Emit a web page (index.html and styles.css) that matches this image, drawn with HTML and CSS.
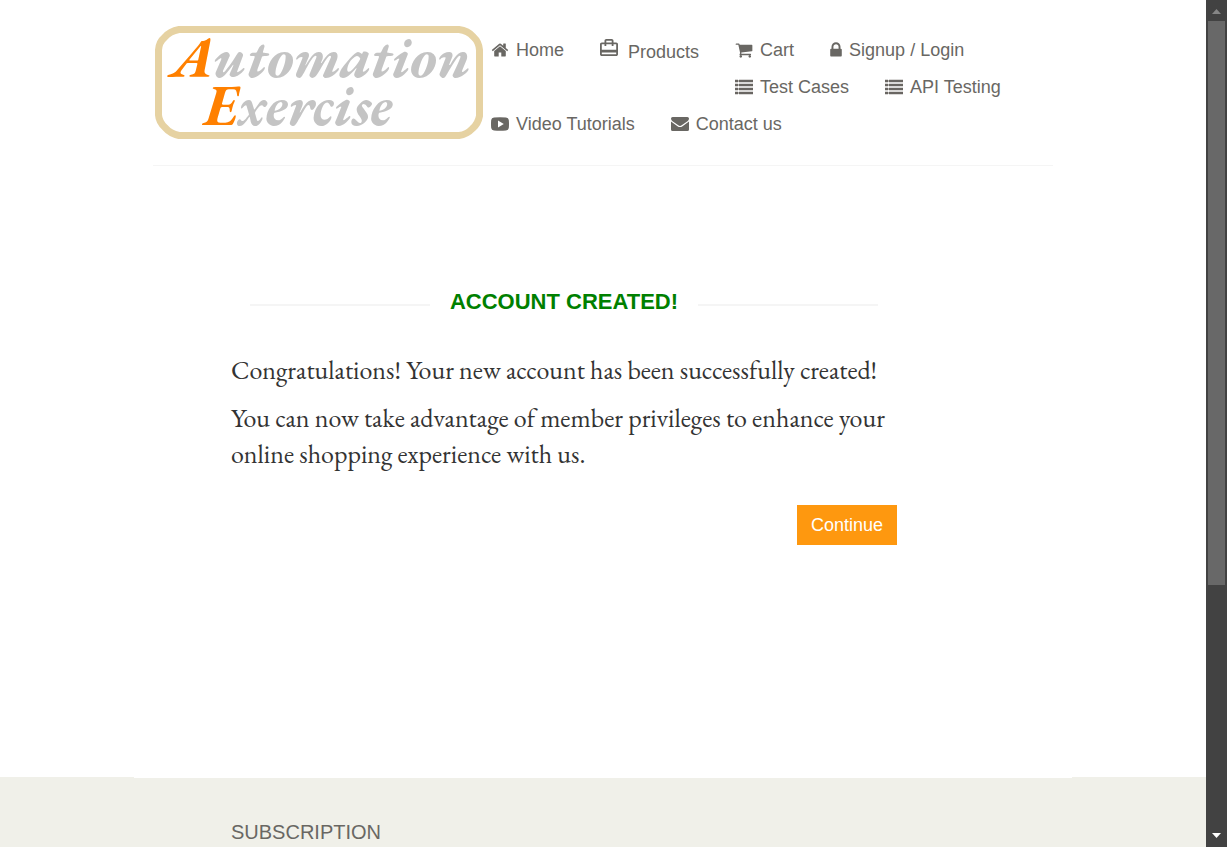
FILE: index.html
```html
<!DOCTYPE html>
<html lang="en">
<head>
<meta charset="utf-8">
<title>Automation Exercise - Account Created</title>
<link rel="stylesheet" href="styles.css">
</head>
<body>
<svg class="symbols" aria-hidden="true">
  <symbol id="list" viewBox="0 0 18 14"><path d="M0 0h3v2H0zM0 4h3v2H0zM0 8h3v2H0zM0 12h3v2H0zM4 0h14v2H4zM4 4h14v2H4zM4 8h14v2H4zM4 12h14v2H4z" stroke="currentColor" stroke-width=".5"/></symbol>
</svg>
<div class="page">
  <header class="container">
    <div class="header-row">
      <a class="logo" href="#" aria-label="Automation Exercise">
        <svg viewBox="0 0 328 113">
          <path d="M24 3.500H304Q313 4.500 318.500 11 324 16 324.500 24V90Q323 98 317.500 102.500 312 108.500 304 109.500H24Q15 107.500 10 101.500 4 96 3.500 89V24Q4 16 9.500 11.500 15 5 24 3.500Z" fill="#fff" stroke="#e6d2a2" stroke-width="7"/>
          <g class="logo-text">
            <text x="16" y="51"><tspan class="initial">A</tspan>utomation</text>
            <text x="50" y="99"><tspan class="initial">E</tspan>xercise</text>
          </g>
        </svg>
      </a>
      <nav>
        <ul>
          <li><a href="#"><svg class="icon" viewBox="0 0 1792 1792"><path d="M1472 992v480q0 26-19 45t-45 19h-384v-384h-256v384h-384q-26 0-45-19t-19-45v-480q0-1 .5-3t.5-3l575-474 575 474q1 2 1 6zm223-69l-62 74q-8 9-21 11h-3q-13 0-21-7l-692-577-692 577q-12 8-24 7-13-2-21-11l-62-74q-8-10-7-23.500t11-21.500l719-599q32-26 76-26t76 26l244 204v-195q0-14 9-23t23-9h192q14 0 23 9t9 23v408l219 182q10 8 11 21.500t-7 23.500z"/></svg>Home</a></li>
          <li><a class="products" href="#"><svg class="icon" viewBox="2 1 20 20"><path d="M20 6h-3V4c0-1.110-.89-2-2-2H9c-1.110 0-2 .89-2 2v2H4c-1.110 0-2 .89-2 2v11c0 1.110.89 2 2 2h16c1.110 0 2-.89 2-2V8c0-1.110-.89-2-2-2zM9 4h6v2H9V4zm11 15H4v-2h16v2zm0-5H4V8h3v2h2V8h6v2h2V8h3v6z"/></svg><span>Products</span></a></li>
          <li><a href="#"><svg class="icon" viewBox="0 0 1792 1792"><path d="M704 1536q0 52-38 90t-90 38-90-38-38-90 38-90 90-38 90 38 38 90zm896 0q0 52-38 90t-90 38-90-38-38-90 38-90 90-38 90 38 38 90zm128-1088v512q0 24-16.500 42.500t-40.500 21.500l-1044 122q13 60 13 70 0 16-24 64h920q26 0 45 19t19 45-19 45-45 19h-1024q-26 0-45-19t-19-45q0-11 8-31.500t16-36 21.500-40 15.500-29.500l-177-823h-204q-26 0-45-19t-19-45 19-45 45-19h256q16 0 28.500 6.500t19.500 15.500 13 24.500 8 26 5.500 29.500 4.500 26h1201q26 0 45 19t19 45z"/></svg>Cart</a></li>
          <li><a href="#"><svg class="icon icon-narrow" viewBox="320 0 1152 1792"><path d="M640 768h512v-192q0-106-75-181t-181-75-181 75-75 181v192zm832 96v576q0 40-28 68t-68 28h-960q-40 0-68-28t-28-68v-576q0-40 28-68t68-28h32v-192q0-184 132-316t316-132 316 132 132 316v192h32q40 0 68 28t28 68z"/></svg>Signup / Login</a></li>
        </ul>
        <ul class="shifted">
          <li><a href="#"><svg class="icon"><use href="#list"/></svg>Test Cases</a></li>
          <li><a href="#"><svg class="icon"><use href="#list"/></svg>API Testing</a></li>
        </ul>
        <ul>
          <li><a href="#"><svg class="icon" viewBox="0 0 18 18"><path fill-rule="evenodd" d="M3 2.500Q9 2 15 2.500 17.500 2.700 17.800 5 18.200 9 17.800 13 17.500 15.300 15 15.500 9 16 3 15.500.5 15.300.2 13-.2 9 .2 5 .5 2.700 3 2.500ZM7 5.500V12.500L12.800 9Z"/></svg>Video Tutorials</a></li>
          <li><a href="#"><svg class="icon" viewBox="0 0 18 18"><path d="M0 3.500Q0 2 1.600 2H16.400Q18 2 18 3.500 18 5 16.500 6.200L10.700 10.300Q9 11.500 7.300 10.300L1.500 6.200Q0 5 0 3.500ZM0 6.500 6.500 11.200Q9 13 11.500 11.200L18 6.500V14.400Q18 16 16.400 16H1.600Q0 16 0 14.400Z"/></svg>Contact us</a></li>
        </ul>
      </nav>
    </div>
  </header>
  <main class="container">
    <section class="message">
      <h2>Account Created!</h2>
      <p>Congratulations! Your new account has been successfully created!</p>
      <p>You can now take advantage of member privileges to enhance your online shopping experience with us.</p>
      <div class="actions"><a class="button" href="#">Continue</a></div>
    </section>
  </main>
  <footer>
    <div class="container"><h3>Subscription</h3></div>
  </footer>
</div>
<div class="scrollbar" aria-hidden="true">
  <svg viewBox="0 0 9 5"><path d="M0 5 4.500 0 9 5Z" fill="#868686"/></svg>
  <div class="thumb"></div>
  <svg viewBox="0 0 9 5"><path d="M0 0H9L4.500 5Z" fill="#fff"/></svg>
</div>
</body>
</html>
```
FILE: styles.css
```css
* { box-sizing: border-box; }
body {
  margin: 0;
  height: 100vh;
  display: flex;
  overflow: hidden;
  background: #fff;
  color: #696763;
  font: 18px/24px "Liberation Sans", Arial, sans-serif;
}
a { color: inherit; text-decoration: none; }
.symbols { display: none; }
.page { flex: 1; min-width: 0; overflow: hidden; }
.container { width: 100%; max-width: 938px; margin: 0 auto; padding: 0 19px; }

.header-row {
  display: flex;
  align-items: flex-start;
  gap: 8px;
  padding: 26px 0 26px 2px;
  border-bottom: 1px solid #f5f5f5;
}
.logo { flex: none; width: 328px; }
.logo svg { display: block; width: 100%; overflow: visible; }
.logo-text {
  font: italic bold 57px "EB Garamond", Garamond, "Liberation Serif", serif;
  font-variant-ligatures: none;
  fill: #c4c4c4;
}
.initial { fill: #ff8000; }

nav { padding-top: 12px; display: grid; gap: 13px; }
ul { display: flex; gap: 36px; margin: 0; padding: 0; list-style: none; }
.shifted { padding-left: 244px; }
nav a { display: flex; align-items: center; gap: 7px; white-space: nowrap; }
.icon { width: 18px; height: 18px; fill: currentColor; flex: none; }
.icon-narrow { width: 12px; }
.products { gap: 10px; align-items: flex-start; }
.products span { padding-top: 2px; margin-bottom: -2px; }

main.container {
  position: relative;
  margin-bottom: -1px;
  padding: 121px 97px 233px;
  background: #fff;
}
.message { max-width: 666px; }
h2 {
  display: flex;
  align-items: center;
  gap: 20px;
  margin: 0 19px 35px;
  color: green;
  font-size: 22px;
  line-height: 30px;
  text-transform: uppercase;
}
h2::before, h2::after {
  content: "";
  flex: 1;
  height: 2px;
  margin-top: 5px;
  background: #f5f5f5;
}
.message p {
  margin: 0 0 12px;
  color: #333;
  font: 26px/36px "EB Garamond", Garamond, "Liberation Serif", serif;
}
.actions { display: flex; justify-content: flex-end; padding-top: 21px; }
.button { padding: 8px 14px; background: #fe980f; color: #fff; }

footer { background: #f0f0e9; padding: 43px 0; }
footer .container { padding: 0 97px; }
h3 { margin: 0; font-size: 20px; font-weight: 400; text-transform: uppercase; }

.scrollbar {
  flex: none;
  width: 21px;
  display: flex;
  flex-direction: column;
  align-items: center;
  padding: 9px 0;
  background: #424242;
}
.scrollbar svg { width: 9px; height: 5px; }
.thumb { width: 17px; height: 68%; margin: 7px 0 auto; background: #686868; }
```
